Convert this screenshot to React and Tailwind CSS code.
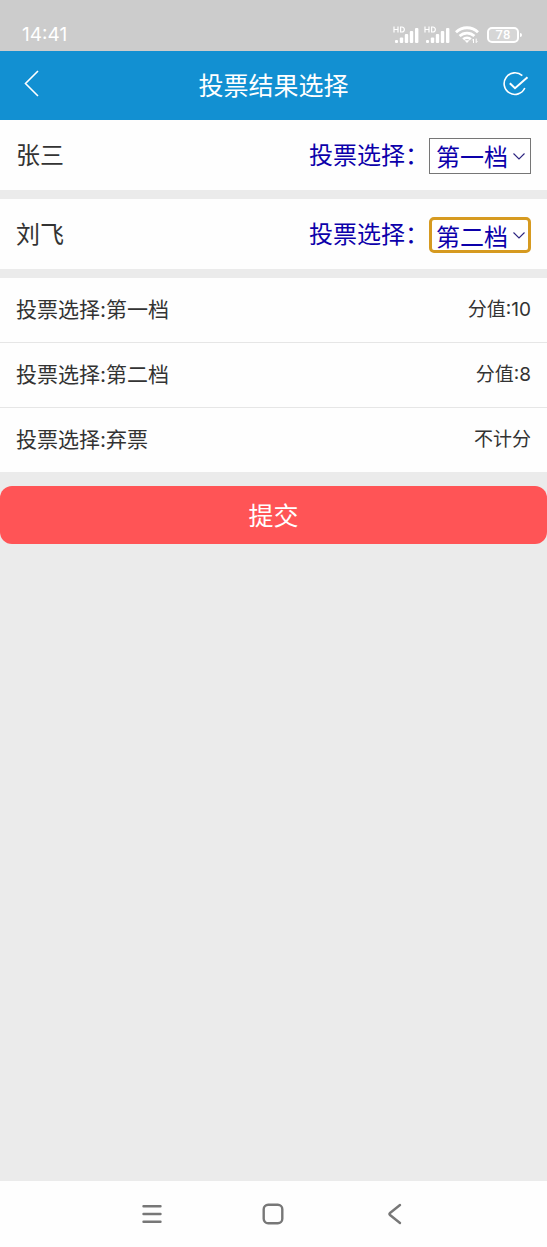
import { useState } from "react";

const candidates = [
  { id: "zhangsan", name: "张三", initial: "第一档", highlighted: false },
  { id: "liufei", name: "刘飞", initial: "第二档", highlighted: true },
];

const levels = ["第一档", "第二档", "弃票"];

const scores = [
  { label: "投票选择:第一档", score: "分值:10" },
  { label: "投票选择:第二档", score: "分值:8" },
  { label: "投票选择:弃票", score: "不计分" },
];

function Signal() {
  return (
    <svg width="27" height="18" viewBox="0 0 27 18" fill="#fff" aria-hidden="true">
      <path d="M1 .5v6M5 .5v6M1 3.5h4M7.6 1v5h1.2c3.4 0 3.4-5 0-5z" fill="none" stroke="#fff" strokeWidth="1.2" />
      <rect x="2" y="14" width="3" height="3" rx="1" />
      <rect x="6.8" y="11.5" width="3.4" height="5.5" rx="1" />
      <rect x="11.8" y="8" width="3.4" height="9" rx="1" />
      <rect x="16.8" y="5" width="3.4" height="12" rx="1" />
      <rect x="22" y="2" width="3.4" height="15" rx="1" />
    </svg>
  );
}

function Wifi() {
  return (
    <svg width="24" height="18" viewBox="0 0 24 18" fill="none" stroke="#fff" strokeWidth="2.8" aria-hidden="true">
      <path d="M1 6.3C7.2.2 16.8.2 23 6.3" />
      <path d="M4.6 10.1c4.2-4 10.6-4 14.8 0" />
      <path d="M8.2 13.3c2.2-2 5.4-2 7.6 0" />
      <path d="M9.4 14.2h5.2L12 17z" fill="#fff" stroke="none" />
      <path d="M18.5 17v-4l-1.2 1.4M21.2 12.6v4l1.2-1.4" strokeWidth="1" />
    </svg>
  );
}

function StatusBar() {
  return (
    <div className="flex h-[51px] shrink-0 items-end justify-between bg-[#cccccc] pr-[25px] pb-[5px] pl-[22px] text-white">
      <span className="font-['Inter','Noto_Sans_CJK_SC',sans-serif] text-[19px] leading-[22px]">14:41</span>
      <div className="flex items-center gap-1 pb-0.5">
        <Signal />
        <Signal />
        <Wifi />
        <div className="flex items-center gap-px pl-1">
          <span className="flex h-4 w-8 items-center justify-center rounded-[5px] border-2 border-white bg-white/20 font-['Roboto',sans-serif] text-[13px] leading-3 font-medium">78</span>
          <span className="h-1 w-0.5 rounded-r bg-white" />
        </div>
      </div>
    </div>
  );
}

function Header() {
  return (
    <header className="flex h-[69px] shrink-0 items-center justify-between bg-[#1290d2] px-[18px] pb-[3px] text-white">
      <button type="button" aria-label="返回" className="flex w-7 justify-center">
        <svg width="28" height="28" viewBox="0 0 28 28" fill="none" stroke="currentColor" strokeWidth="1.6" aria-hidden="true">
          <path d="M20 1 7.5 13.5 20 26" />
        </svg>
      </button>
      <h1 className="text-[25px] leading-8">投票结果选择</h1>
      <button type="button" aria-label="完成" className="flex w-7 justify-center">
        <svg width="28" height="28" viewBox="0 0 28 28" fill="none" stroke="currentColor" strokeWidth="1.6" aria-hidden="true">
          <path d="M21.3 5.7A10.8 10.8 0 1 0 23.8 18" />
          <path d="m8.8 13.3 5.2 4.9L26.5 7.3" strokeWidth="2" />
        </svg>
      </button>
    </header>
  );
}

function Candidate({ person }) {
  const [level, setLevel] = useState(person.initial);
  const frame = person.highlighted
    ? "rounded-[5px] border-[3px] border-[#d69a20] pl-1"
    : "border border-[#767676] pl-1.5";

  return (
    <div className="flex h-[70px] items-center justify-between bg-[#fefefe] px-4 pt-0.5 text-2xl">
      <span className="pb-1 leading-8 text-[#333]">{person.name}</span>
      <div className="flex items-center text-[#0c00aa]">
        <label htmlFor={person.id} className="pb-1 leading-8">投票选择：</label>
        <div className="relative">
          <select
            id={person.id}
            value={level}
            onChange={(e) => setLevel(e.target.value)}
            className={`block h-9 w-[102px] appearance-none bg-white leading-8 outline-none ${frame}`}
          >
            {levels.map((l) => (
              <option key={l}>{l}</option>
            ))}
          </select>
          <svg
            className="pointer-events-none absolute top-3.5 right-1.5"
            width="12"
            height="9"
            viewBox="0 0 12 9"
            fill="none"
            stroke="#2c2480"
            strokeWidth="1.1"
            aria-hidden="true"
          >
            <path d="m.5 1.5 5.5 5.5 5.5-5.5" />
          </svg>
        </div>
      </div>
    </div>
  );
}

function NavigationBar() {
  return (
    <nav className="flex h-[66px] shrink-0 items-center justify-center gap-[97px] bg-[#fefefe] pr-0.5 text-[#777]">
      <button type="button" aria-label="菜单">
        <svg width="24" height="24" viewBox="0 0 24 24" fill="none" stroke="currentColor" strokeWidth="2.4" strokeLinecap="round" aria-hidden="true">
          <path d="M3.5 4.2h17M3.5 12h17M3.5 19.8h17" />
        </svg>
      </button>
      <button type="button" aria-label="主页">
        <svg width="24" height="24" viewBox="0 0 24 24" fill="none" stroke="currentColor" strokeWidth="2.4" aria-hidden="true">
          <rect x="2.7" y="2.7" width="18.6" height="18.6" rx="4.5" />
        </svg>
      </button>
      <button type="button" aria-label="后退">
        <svg width="24" height="24" viewBox="0 0 24 24" fill="none" stroke="currentColor" strokeWidth="2.4" strokeLinecap="round" aria-hidden="true">
          <path d="M18 3 8 11q-1.2 1 0 2l10 8" />
        </svg>
      </button>
    </nav>
  );
}

export default function App() {
  return (
    <div className="flex min-h-screen flex-col bg-[#ebebeb] font-['Noto_Sans_CJK_SC',sans-serif]">
      <StatusBar />
      <Header />
      <main className="flex-1">
        <div className="flex flex-col gap-[9px]">
          {candidates.map((person) => (
            <Candidate key={person.id} person={person} />
          ))}
        </div>
        <ul className="mt-[9px] divide-y divide-[#e6e6e6] bg-[#fefefe]">
          {scores.map((row) => (
            <li key={row.label} className="flex items-center justify-between px-4 py-4 font-['Inter','Noto_Sans_CJK_SC',sans-serif] text-[#333]">
              <span className="text-[21px] leading-8">{row.label}</span>
              <span className="text-[19px] leading-8">{row.score}</span>
            </li>
          ))}
        </ul>
        <button type="button" className="mt-3.5 h-[58px] w-full rounded-xl bg-[#ff5456] pb-[3px] text-[25px] leading-8 text-white">
          提交
        </button>
      </main>
      <NavigationBar />
    </div>
  );
}
